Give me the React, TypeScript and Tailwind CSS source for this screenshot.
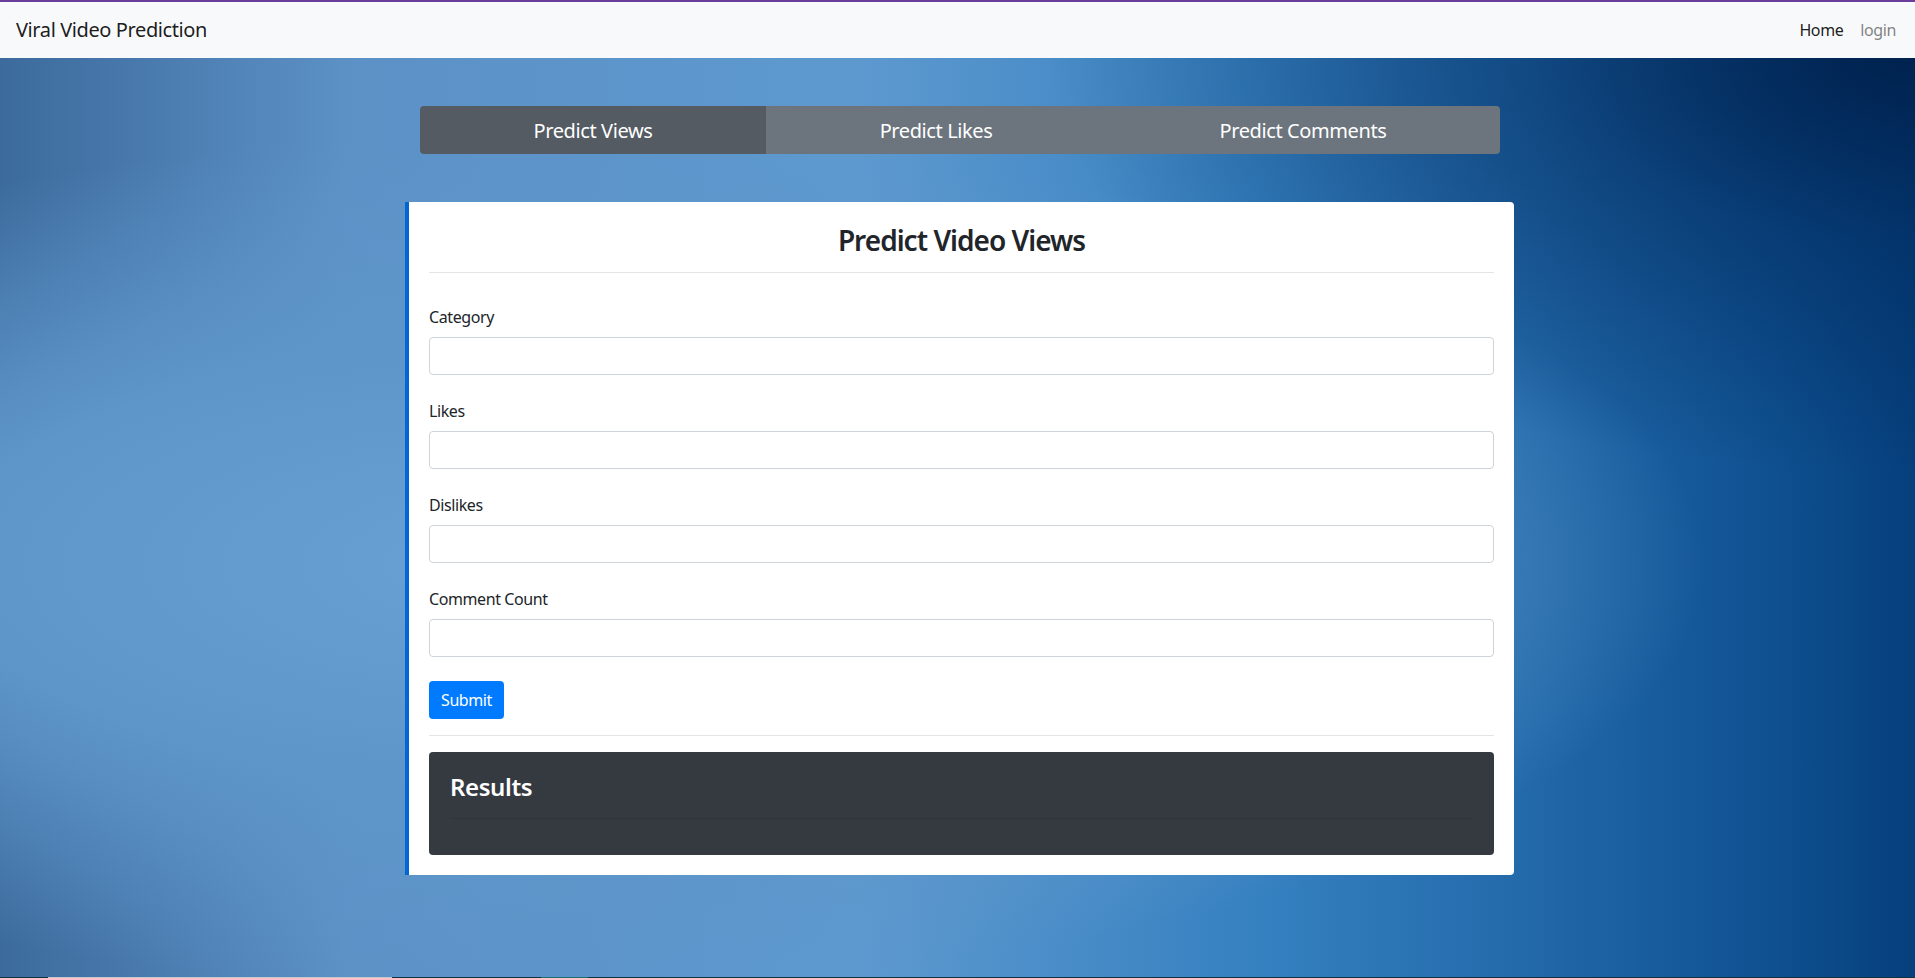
import React from "react";

const fields = ["Category", "Likes", "Dislikes", "Comment Count"];
const tabs = ["Predict Views", "Predict Likes", "Predict Comments"];

export default function App() {
  return (
    <div className="flex h-screen flex-col overflow-hidden font-['Segoe_UI','Noto_Sans',sans-serif] tracking-[-0.025em] text-[#212529]">
      {/* navbar */}
      <nav className="flex h-[58px] shrink-0 items-center justify-between border-t-2 border-[#6a3d9a] bg-[#f8f9fa] pl-4 pr-[19px]">
        <span className="text-[20px] leading-[30px] text-black/90">Viral Video Prediction</span>
        <div className="flex items-center gap-[17px] text-base">
          <a className="text-black/90">Home</a>
          <a className="text-black/50">login</a>
        </div>
      </nav>

      <main className="flex-1 bg-[radial-gradient(ellipse_at_100%_0%,#00224f_0%,rgba(0,40,90,0.5)_14%,rgba(0,40,90,0)_32%),radial-gradient(ellipse_at_28%_55%,#6aa1d4_0%,#5e96ca_30%,rgba(80,140,200,0)_60%),linear-gradient(90deg,#3c6a9c_0%,#5c91c6_18%,#5d99cf_45%,#3580c0_66%,#2269aa_80%,#0e4f8f_93%,#063f7c_100%)]">
        <div className="flex justify-center pl-[5px] pt-12">
          <div className="flex w-[1080px] overflow-hidden rounded">
            {tabs.map((t, i) => (
              <button
                key={t}
                className={
                  "flex-auto pb-[9px] pt-[11px] text-center text-[20px] leading-[28px] text-white " +
                  (i === 0 ? "bg-[#545b62]" : "bg-[#6c757d]")
                }
              >
                {t}
              </button>
            ))}
          </div>
        </div>

        <div className="flex justify-center pl-1 pt-12">
          <div className="w-[1109px] rounded-r border-l-4 border-[#0366d6] bg-white p-5 pt-[21px]">
            <h3 className="text-center text-[28px] font-semibold leading-[34px] tracking-[-0.035em]">Predict Video Views</h3>
            <hr className="mb-8 mt-[15px] border-black/10" />

            <form>
              {fields.map((f) => (
                <div key={f} className="mb-6">
                  <label className="mb-2 block text-base leading-6">{f}</label>
                  <input className="block h-[38px] w-full rounded border border-[#ced4da] bg-white px-3" />
                </div>
              ))}
              <button type="button" className="h-[38px] rounded bg-[#007bff] px-3 text-base text-white">
                Submit
              </button>
            </form>

            <hr className="mb-4 mt-4 border-black/10" />

            <div className="rounded bg-[#343a40] px-[21px] pb-5 pt-5">
              <h4 className="text-[24px] font-semibold leading-[30px] text-white">Results</h4>
              <hr className="mb-4 mt-4 border-black/10" />
            </div>
          </div>
        </div>
      </main>

      <div className="flex h-px shrink-0 bg-[#0f3340]">
        <div className="ml-12 w-[344px] bg-[#c8c8c8]" />
        <div className="ml-[149px] w-[47px] bg-[#1a7070]" />
      </div>
    </div>
  );
}
